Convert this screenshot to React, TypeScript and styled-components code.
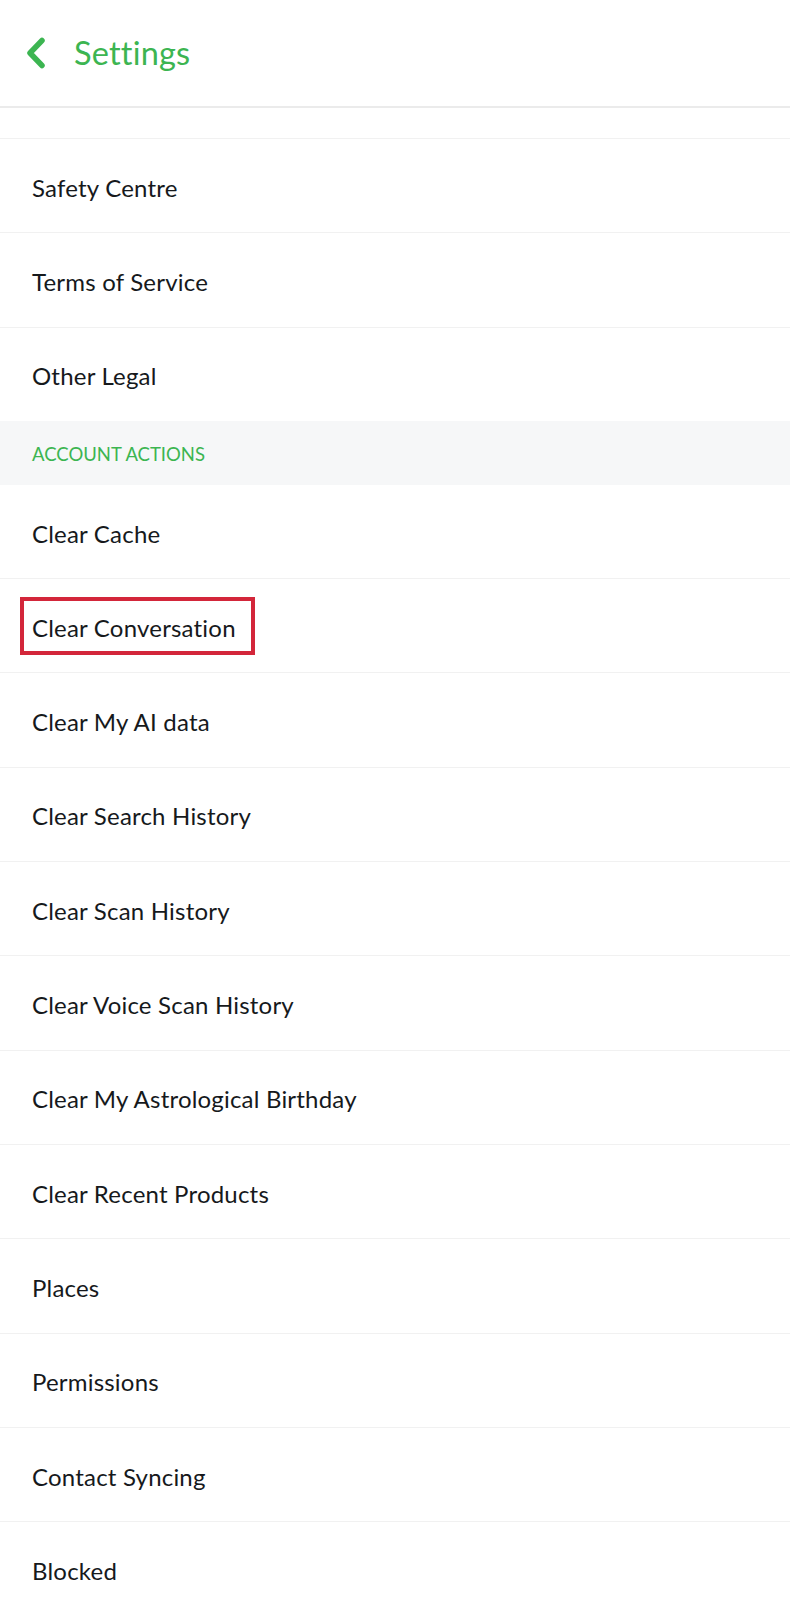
import React from "react";
import styled, { createGlobalStyle } from "styled-components";

const GlobalStyle = createGlobalStyle`
    html, body {
        margin: 0;
        padding: 0;
        background: #ffffff;
    }
    body {
        font-family: "Lato", "Noto Sans", sans-serif;
        -webkit-font-smoothing: antialiased;
    }
`;

const GREEN = "#3cb551";

type Item = { label: string; highlighted?: boolean };

const topItems: Item[] = [
    { label: "Safety Centre" },
    { label: "Terms of Service" },
    { label: "Other Legal" },
];

const accountItems: Item[] = [
    { label: "Clear Cache" },
    { label: "Clear Conversation", highlighted: true },
    { label: "Clear My AI data" },
    { label: "Clear Search History" },
    { label: "Clear Scan History" },
    { label: "Clear Voice Scan History" },
    { label: "Clear My Astrological Birthday" },
    { label: "Clear Recent Products" },
    { label: "Places" },
    { label: "Permissions" },
    { label: "Contact Syncing" },
    { label: "Blocked" },
];

const BackIcon = () => (
    <svg width="22" height="32" viewBox="0 0 22 32" fill="none">
        <path
            d="M17 3.5L5 16L17 28.5"
            stroke={GREEN}
            strokeWidth="5.5"
            strokeLinecap="round"
            strokeLinejoin="round"
        />
    </svg>
);

const App = () => {
    return (
        <>
            <GlobalStyle />
            <Page>
                <Header>
                    <BackButton>
                        <BackIcon />
                    </BackButton>
                    <Title>Settings</Title>
                </Header>
                <PartialRow />
                <List>
                    {topItems.map((item) => (
                        <Row key={item.label}>
                            <RowText>{item.label}</RowText>
                        </Row>
                    ))}
                </List>
                <SectionHeader>ACCOUNT ACTIONS</SectionHeader>
                <List>
                    {accountItems.map((item) => (
                        <Row key={item.label}>
                            <RowText>{item.label}</RowText>
                            {item.highlighted && <Highlight />}
                        </Row>
                    ))}
                </List>
            </Page>
        </>
    );
};

const Page = styled.div`
    display: flex;
    flex-direction: column;
    width: 790px;
    height: 1600px;
    overflow: hidden;
    background: #ffffff;
`;

const Header = styled.header`
    display: flex;
    flex-direction: row;
    align-items: center;
    height: 104px;
    padding-left: 25px;
    padding-bottom: 2px;
    border-bottom: 2px solid #ebebeb;
    box-sizing: content-box;
    flex-shrink: 0;
`;

const BackButton = styled.div`
    display: flex;
    align-items: center;
    justify-content: center;
    width: 22px;
    height: 32px;
    margin-top: 2px;
`;

const Title = styled.h1`
    margin: 0 0 0 27px;
    color: ${GREEN};
    font-size: 32.5px;
    font-weight: 400;
    letter-spacing: 0.2px;
`;

const PartialRow = styled.div`
    height: 30px;
    border-bottom: 1px solid #f1f1f1;
    flex-shrink: 0;
`;

const List = styled.div`
    display: flex;
    flex-direction: column;
`;

const Row = styled.div`
    position: relative;
    display: flex;
    align-items: center;
    height: 90.3px;
    padding-top: 3px;
    padding-left: 32px;
    border-bottom: 1px solid #f1f1f1;
    flex-shrink: 0;

    &:last-child {
        border-bottom: none;
    }
`;

const RowText = styled.span`
    color: #16191c;
    font-size: 24px;
    font-weight: 400;
    letter-spacing: 0.2px;
`;

const SectionHeader = styled.div`
    display: flex;
    align-items: center;
    height: 61px;
    padding-top: 3px;
    padding-left: 32px;
    background: #f6f7f8;
    color: ${GREEN};
    font-size: 18.5px;
    font-weight: 400;
    flex-shrink: 0;
`;

const Highlight = styled.div`
    position: absolute;
    left: 20px;
    top: 18px;
    width: 227px;
    height: 50px;
    border: 4px solid #d3263a;
    pointer-events: none;
`;

export default App;
